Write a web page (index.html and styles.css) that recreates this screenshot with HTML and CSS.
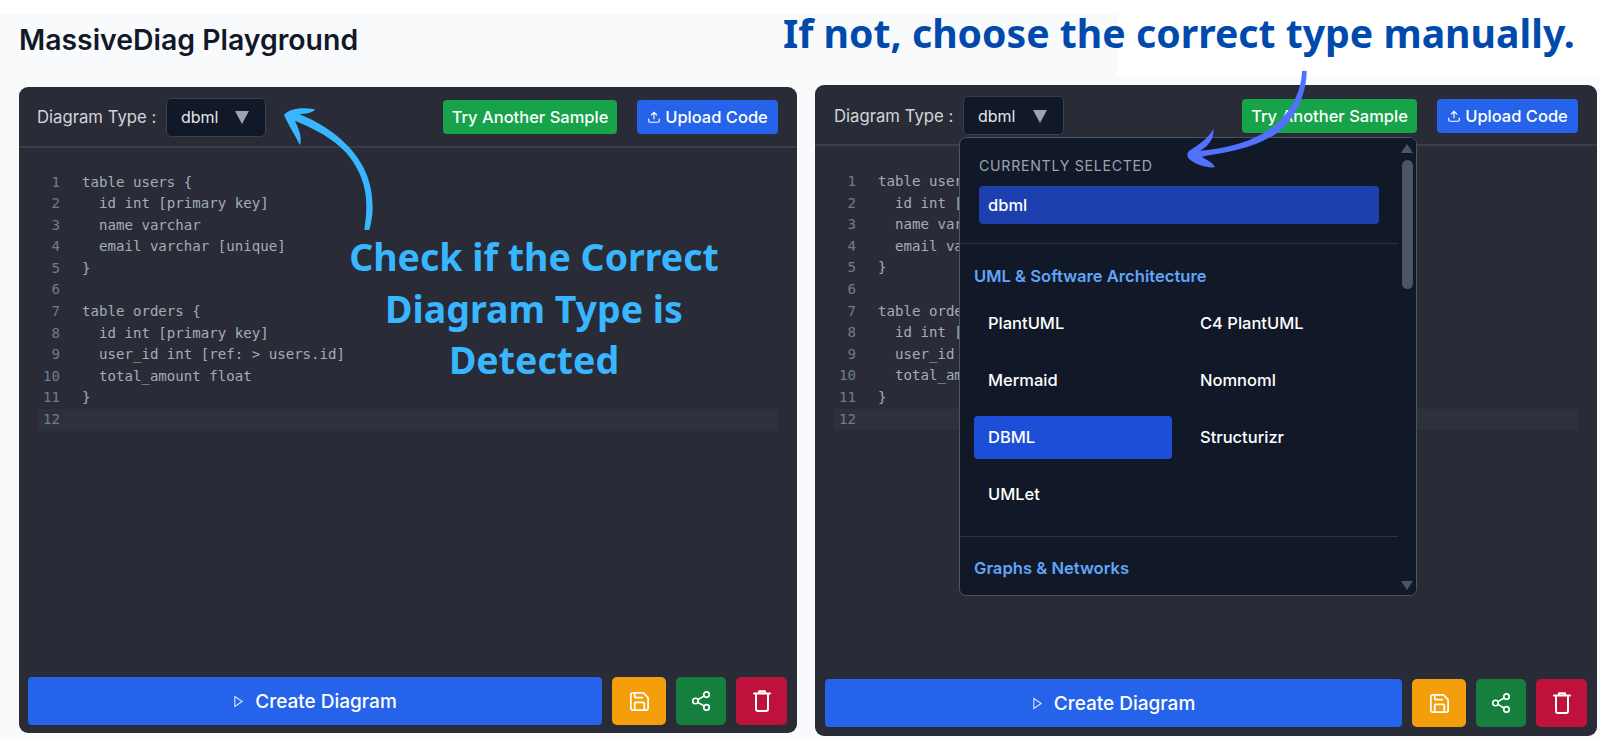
FILE: index.html
```html
<!DOCTYPE html>
<html lang="en">
<head>
<meta charset="utf-8">
<title>MassiveDiag Playground</title>
<link rel="stylesheet" href="styles.css">
</head>
<body>
<div class="page">
  <div class="patch"></div>
  <section class="col col-left">
    <h1 class="title">MassiveDiag Playground</h1>
    <div class="panel panel-left">
      <header class="bar">
        <span class="label">Diagram Type :</span>
        <div class="select"><span>dbml</span><i class="caret"></i></div>
        <div class="actions">
          <button class="btn btn-green">Try Another Sample</button>
          <button class="btn btn-blue"><svg class="ic-up" viewBox="0 0 24 24"><path d="M12 16V4M7 9l5-5 5 5M3 15v4a2 2 0 0 0 2 2h14a2 2 0 0 0 2-2v-4"/></svg>Upload Code</button>
        </div>
      </header>
      <div class="code">
        <div class="ln"><b>1</b><code>table users {</code></div>
        <div class="ln"><b>2</b><code>  id int [primary key]</code></div>
        <div class="ln"><b>3</b><code>  name varchar</code></div>
        <div class="ln"><b>4</b><code>  email varchar [unique]</code></div>
        <div class="ln"><b>5</b><code>}</code></div>
        <div class="ln"><b>6</b><code></code></div>
        <div class="ln"><b>7</b><code>table orders {</code></div>
        <div class="ln"><b>8</b><code>  id int [primary key]</code></div>
        <div class="ln"><b>9</b><code>  user_id int [ref: &gt; users.id]</code></div>
        <div class="ln"><b>10</b><code>  total_amount float</code></div>
        <div class="ln"><b>11</b><code>}</code></div>
        <div class="ln ln-active"><b>12</b><code></code></div>
      </div>
      <footer class="foot">
        <button class="create"><svg class="ic-play" viewBox="0 0 12 14"><path d="M2 1.5l8 5.5-8 5.5z"/></svg>Create Diagram</button>
        <button class="sq sq-save"><svg class="ic" viewBox="0 0 24 24"><path d="M15.2 3a2 2 0 0 1 1.4.6l3.8 3.8a2 2 0 0 1 .6 1.4V19a2 2 0 0 1-2 2H5a2 2 0 0 1-2-2V5a2 2 0 0 1 2-2z"/><path d="M17 21v-7a1 1 0 0 0-1-1H8a1 1 0 0 0-1 1v7"/><path d="M7 3v4a1 1 0 0 0 1 1h7"/></svg></button>
        <button class="sq sq-share"><svg class="ic ic-share" viewBox="0 0 24 24"><circle cx="18" cy="5" r="3"/><circle cx="6" cy="12" r="3"/><circle cx="18" cy="19" r="3"/><path d="M8.6 13.5l6.8 4M15.4 6.5l-6.8 4"/></svg></button>
        <button class="sq sq-del"><svg class="ic-trash" viewBox="0 0 18 23"><path d="M1 4.5h16M6 4V2.2h6V4M3 5v15a2 2 0 0 0 2 2h8a2 2 0 0 0 2-2V5"/></svg></button>
      </footer>
    </div>
  </section>

  <section class="col col-right">
    <div class="panel panel-right">
      <header class="bar">
        <span class="label">Diagram Type :</span>
        <div class="select"><span>dbml</span><i class="caret"></i></div>
        <div class="actions">
          <button class="btn btn-green">Try Another Sample</button>
          <button class="btn btn-blue"><svg class="ic-up" viewBox="0 0 24 24"><path d="M12 16V4M7 9l5-5 5 5M3 15v4a2 2 0 0 0 2 2h14a2 2 0 0 0 2-2v-4"/></svg>Upload Code</button>
        </div>
      </header>
      <div class="code">
        <div class="ln"><b>1</b><code>table users {</code></div>
        <div class="ln"><b>2</b><code>  id int [primary key]</code></div>
        <div class="ln"><b>3</b><code>  name varchar</code></div>
        <div class="ln"><b>4</b><code>  email varchar [unique]</code></div>
        <div class="ln"><b>5</b><code>}</code></div>
        <div class="ln"><b>6</b><code></code></div>
        <div class="ln"><b>7</b><code>table orders {</code></div>
        <div class="ln"><b>8</b><code>  id int [primary key]</code></div>
        <div class="ln"><b>9</b><code>  user_id int [ref: &gt; users.id]</code></div>
        <div class="ln"><b>10</b><code>  total_amount float</code></div>
        <div class="ln"><b>11</b><code>}</code></div>
        <div class="ln ln-active"><b>12</b><code></code></div>
      </div>
      <footer class="foot">
        <button class="create"><svg class="ic-play" viewBox="0 0 12 14"><path d="M2 1.5l8 5.5-8 5.5z"/></svg>Create Diagram</button>
        <button class="sq sq-save"><svg class="ic" viewBox="0 0 24 24"><path d="M15.2 3a2 2 0 0 1 1.4.6l3.8 3.8a2 2 0 0 1 .6 1.4V19a2 2 0 0 1-2 2H5a2 2 0 0 1-2-2V5a2 2 0 0 1 2-2z"/><path d="M17 21v-7a1 1 0 0 0-1-1H8a1 1 0 0 0-1 1v7"/><path d="M7 3v4a1 1 0 0 0 1 1h7"/></svg></button>
        <button class="sq sq-share"><svg class="ic ic-share" viewBox="0 0 24 24"><circle cx="18" cy="5" r="3"/><circle cx="6" cy="12" r="3"/><circle cx="18" cy="19" r="3"/><path d="M8.6 13.5l6.8 4M15.4 6.5l-6.8 4"/></svg></button>
        <button class="sq sq-del"><svg class="ic-trash" viewBox="0 0 18 23"><path d="M1 4.5h16M6 4V2.2h6V4M3 5v15a2 2 0 0 0 2 2h8a2 2 0 0 0 2-2V5"/></svg></button>
      </footer>

      <div class="menu">
        <div class="menu-sel">
          <div class="menu-cap">CURRENTLY SELECTED</div>
          <div class="menu-cur">dbml</div>
        </div>
        <div class="menu-group">
          <div class="menu-title">UML &amp; Software Architecture</div>
          <div class="menu-grid">
            <div class="opt">PlantUML</div>
            <div class="opt">C4 PlantUML</div>
            <div class="opt">Mermaid</div>
            <div class="opt">Nomnoml</div>
            <div class="opt opt-on">DBML</div>
            <div class="opt">Structurizr</div>
            <div class="opt">UMLet</div>
          </div>
        </div>
        <div class="menu-group menu-group-next">
          <div class="menu-title">Graphs &amp; Networks</div>
        </div>
        <div class="sb">
          <i class="sb-up"></i>
          <i class="sb-thumb"></i>
          <i class="sb-down"></i>
        </div>
      </div>
    </div>
  </section>

  <p class="note note-left">Check if the Correct<br>Diagram Type is<br>Detected</p>
  <p class="note note-top">If not, choose the correct type manually.</p>
  <svg class="arrow arrow-left" viewBox="0 0 390 450"><path d="M72 75C85 58 120 50 165 58C160 68 135 72 118 73C200 105 340 190 338 350C338 380 332 405 328 420L313 420C325 340 325 270 260 190C220 145 160 115 105 92C115 115 128 140 120 166C108 140 85 105 72 75Z"/></svg>
  <svg class="arrow arrow-right" viewBox="0 0 510 360"><path d="M396 33L410 33C410 90 385 170 320 220C260 262 170 278 95 290C110 300 130 308 135 322C105 325 70 310 55 295C50 285 52 278 58 272C85 255 115 235 130 207C133 235 115 260 90 272C170 265 250 245 310 200C365 155 395 90 396 33Z"/></svg>
</div>
</body>
</html>
```

FILE: styles.css
```css
* { box-sizing: border-box; }
html, body { margin: 0; padding: 0; background: #fff; }
body { width: 1600px; height: 750px; overflow: hidden; font-family: Inter, "Liberation Sans", sans-serif; }

.page { position: relative; margin-top: 14px; height: 726px; background: #f9fafb; display: flex; align-items: flex-start; padding-left: 19px; }
.patch { position: absolute; left: 1117px; top: -14px; width: 483px; height: 76px; background: #fff; }

.col { position: relative; }
.col-left { width: 778px; }
.col-right { width: 782px; margin-left: 18px; margin-top: 71px; }

.title { margin: 0; height: 73px; padding-top: 9px; font-size: 28.4px; line-height: 34px; font-weight: 600; color: #111827; white-space: nowrap; }

.panel { position: relative; display: flex; flex-direction: column; background: #292c36; border-radius: 9px; }
.panel-left { height: 646px; }
.panel-right { height: 651px; }

.bar { display: flex; align-items: center; height: 61px; padding: 1px 19px 0 18px; border-bottom: 2px solid #3a3d4b; }
.panel-right .bar { padding: 2px 19px 0 19px; }
.label { width: 129px; font-size: 16.7px; color: #d1d5db; white-space: nowrap; }
.select { display: flex; align-items: center; justify-content: space-between; width: 100px; height: 39px; padding: 0 16px 0 14px; background: #111827; border: 1px solid #374151; border-radius: 5px; color: #e5e7eb; font-size: 16px; }
.panel-right .select { width: 101px; }
.caret { width: 0; height: 0; border-left: 7px solid transparent; border-right: 7px solid transparent; border-top: 13px solid #9ca3af; margin-top: 1px; }
.actions { margin-left: auto; display: flex; gap: 20px; }
.btn { display: flex; align-items: center; justify-content: center; height: 34px; border: 0; border-radius: 4px; color: #fff; font: 500 16.5px Inter, "Liberation Sans", sans-serif; white-space: nowrap; padding: 0; }
.btn-green { width: 174px; background: #16a34a; }
.btn-blue { width: 141px; background: #2563eb; }
.panel-right .btn-green { width: 175px; }
.ic-up { width: 14px; height: 14px; margin-right: 4px; fill: none; stroke: #fff; stroke-width: 2; }

.code { flex: 1; margin: 23.5px 19px 0; }
.panel-right .code { margin-top: 25px; }
.ln { display: flex; height: 21.6px; line-height: 21.6px; font-family: "DejaVu Sans Mono", "Liberation Mono", monospace; font-size: 14.1px; }
.ln b { width: 38px; padding-right: 16px; text-align: right; font-weight: 400; color: #6f7c8e; flex: none; background: #292c36; }
.ln code { flex: 1; padding-left: 6px; font: inherit; color: #a3acb9; white-space: pre; }
.ln-active { background: #2c313c; }
.ln-active b { background: #2c313c; }

.foot { display: flex; gap: 10px; padding: 0 10px 8px 9px; }
.panel-right .foot { padding: 0 10px 9px 10px; }
.create { flex: 1; display: flex; align-items: center; justify-content: center; height: 48px; border: 0; border-radius: 4px; background: #2563eb; color: #fff; font: 500 19px Inter, "Liberation Sans", sans-serif; }
.ic-play { width: 11px; height: 13px; margin-right: 11px; fill: none; stroke: #dbe6ff; stroke-width: 1.2; }
.sq { display: flex; align-items: center; justify-content: center; height: 48px; border: 0; border-radius: 5px; padding: 0; }
.sq-save { width: 54px; background: #f59e0b; }
.sq-share { width: 50px; background: #15803d; }
.sq-del { width: 51px; background: #be123c; }
.ic { width: 23px; height: 23px; fill: none; stroke: #fff; stroke-width: 1.8; stroke-linecap: round; stroke-linejoin: round; }
.ic-share { width: 22px; height: 22px; }
.ic-trash { width: 18px; height: 23px; margin-top: -2px; fill: none; stroke: #fff; stroke-width: 2; stroke-linecap: round; stroke-linejoin: round; }

.menu { position: absolute; left: 144px; top: 52px; width: 458px; height: 459px; background: #111827; border: 1px solid #4b5563; border-radius: 7px; overflow: hidden; }
.menu-sel { width: 439px; height: 106px; padding: 20px 19px 0; border-bottom: 1px solid #2a3344; }
.menu-cap { font-size: 14.2px; line-height: 16px; letter-spacing: 0.7px; color: #9ca3af; font-weight: 400; }
.menu-cur { width: 400px; height: 38px; margin-top: 12px; padding-left: 9px; line-height: 38px; border-radius: 4px; background: #1e40af; color: #fff; font-size: 16.5px; font-weight: 500; }
.menu-group { width: 439px; height: 293px; padding: 22px 14px 0; border-bottom: 1px solid #2a3344; }
.menu-group-next { border: 0; height: auto; padding-top: 21px; }
.menu-title { font-size: 16.6px; line-height: 20px; font-weight: 600; color: #60a5fa; white-space: nowrap; }
.menu-grid { display: grid; grid-template-columns: 198px 198px; grid-auto-rows: 43px; gap: 14px; margin-top: 16px; }
.opt { padding-left: 14px; line-height: 43px; border-radius: 4px; color: #fff; font-size: 16.5px; font-weight: 500; }
.opt-on { background: #1d4ed8; }

.sb { position: absolute; top: 0; right: 0; bottom: 0; width: 18px; display: flex; flex-direction: column; align-items: center; padding: 6px 0 5px; background: #111827; }
.sb-up { width: 0; height: 0; border-left: 6px solid transparent; border-right: 6px solid transparent; border-bottom: 9px solid #4b5563; }
.sb-thumb { width: 11px; height: 129px; margin-top: 7px; border-radius: 6px; background: #4b5563; }
.sb-down { width: 0; height: 0; margin-top: auto; border-left: 6px solid transparent; border-right: 6px solid transparent; border-top: 9px solid #4b5563; }

.note { position: absolute; margin: 0; font-family: "Noto Sans", "Open Sans", sans-serif; font-weight: 700; white-space: nowrap; }
.note-left { left: 334px; top: 217px; width: 400px; text-align: center; font-size: 37.5px; line-height: 51.5px; color: #38b6ff; }
.note-top { left: 783px; top: -4px; font-size: 39.2px; line-height: 46px; color: #004aad; }
.arrow { position: absolute; }
.arrow-left { left: 260px; top: 76px; width: 130px; height: 150px; fill: #38b6ff; }
.arrow-right { left: 1170px; top: 46px; width: 170px; height: 120px; fill: #5271ff; }
```
